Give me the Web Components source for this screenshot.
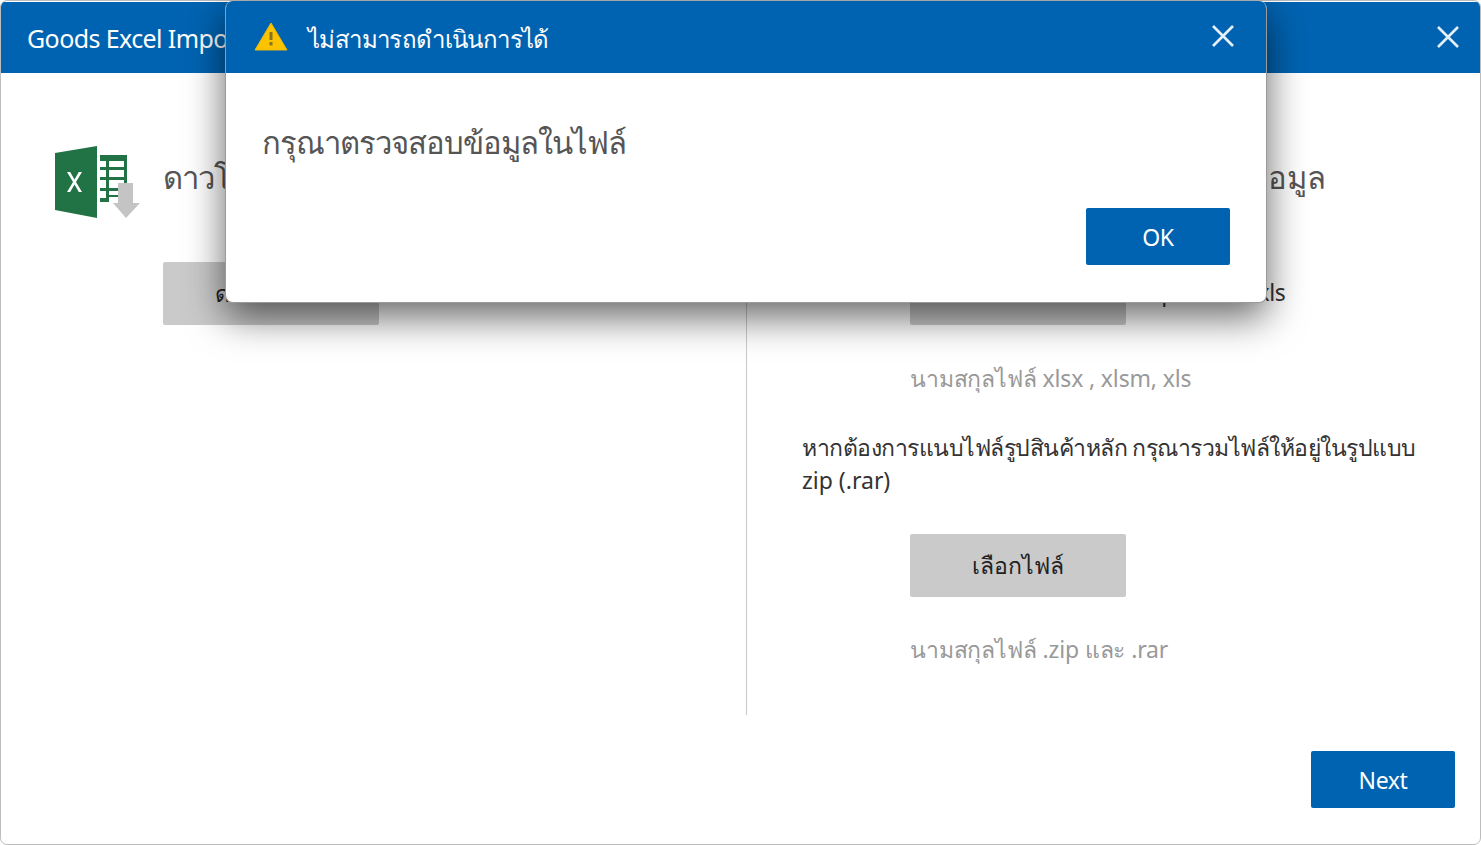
<!DOCTYPE html>
<html lang="th">
<head>
<meta charset="utf-8">
<title>Goods Excel Import</title>
<style>
  html, body { margin: 0; height: 100%; background: #fff; overflow: hidden; }
  body { font-family: "Noto Sans", "Open Sans", "DejaVu Sans", sans-serif; color: #333; }
  .file-row { display: flex; align-items: center; gap: 7px; font-size: 23px; color: #333; }
  .file-name { letter-spacing: -.5px; position: relative; top: -2px; }
  .hint { margin: 37px 0 0; color: #999; font-size: 23px; line-height: 33px; letter-spacing: -.15px; }
  .note { margin: 36px 0 37px -108px; font-size: 23px; line-height: 33px; color: #333; letter-spacing: -.5px; }
  .note span { letter-spacing: 0; }
</style>
</head>
<body>
<import-window heading="Goods Excel Import">
  <import-section slot="left" heading="ดาวโหลดไฟล์ตัวอย่าง" icon>
    <file-button>ดาวน์โหลด</file-button>
  </import-section>
  <import-section slot="right" heading="เลือกไฟล์ที่ต้องการนำเข้าข้อมูล">
    <div class="file-row"><file-button>เลือกไฟล์</file-button><span class="file-name">Import files.xls</span></div>
    <p class="hint">นามสกุลไฟล์ xlsx , xlsm, xls</p>
    <p class="note">หากต้องการแนบไฟล์รูปสินค้าหลัก กรุณารวมไฟล์ให้อยู่ในรูปแบบ <span>zip (.rar)</span></p>
    <file-button>เลือกไฟล์</file-button>
    <p class="hint" style="margin-top: 36px">นามสกุลไฟล์ .zip และ .rar</p>
  </import-section>
  <primary-button slot="footer">Next</primary-button>
</import-window>
<alert-dialog heading="ไม่สามารถดำเนินการได้">
  กรุณาตรวจสอบข้อมูลในไฟล์
  <primary-button slot="actions">OK</primary-button>
</alert-dialog>

<script>
const closeIcon = `<svg width="24" height="24" viewBox="0 0 24 24" fill="none" stroke="#e6f0fa" stroke-width="2.6"><path d="M2 2 22 22M22 2 2 22"/></svg>`;

class ImportWindow extends HTMLElement {
  constructor() {
    super();
    this.attachShadow({ mode: 'open' });
    this.shadowRoot.innerHTML = `
    <style>
      :host { display: flex; flex-direction: column; box-sizing: border-box; width: 1481px; height: 845px; border: 1px solid #bdbdbd; border-radius: 7px; overflow: hidden; background: #fff; }
      header { flex: none; height: 71px; margin-top: 1px; background: #0063b1; color: #fff; display: flex; align-items: center; justify-content: space-between; padding: 0 20px 0 26px; font-size: 25px; }
      header svg { display: block; margin-top: -2px; }
      .title { letter-spacing: -.6px; }
      .columns { display: grid; grid-template-columns: 745px 1px 1fr; height: 642px; }
      .rule { background: #c9c9c9; }
      footer { display: flex; justify-content: flex-end; padding: 36px 25px 0 0; }
    </style>
    <header><span class="title">${this.getAttribute('heading')}</span>${closeIcon}</header>
    <div class="columns">
      <slot name="left"></slot>
      <div class="rule"></div>
      <slot name="right"></slot>
    </div>
    <footer><slot name="footer"></slot></footer>`;
  }
}

class ImportSection extends HTMLElement {
  constructor() {
    super();
    this.attachShadow({ mode: 'open' });
    const icon = this.hasAttribute('icon') ? `
      <svg class="excel" width="86" height="74" viewBox="0 0 86 74">
        <path d="M0 8 42 1V73L0 65Z" fill="#217346"/>
        <path d="M12 27h3.200l4.300 7.500 4.300-7.500H27l-6 10 6 10h-3.200l-4.300-7.500-4.300 7.500H12l6-10Z" fill="#fff"/>
        <path d="M45 10H72V57H63V52H54V57H45V53H51V46H45V43H51V35H45V32H51V25H45V22H51V16H45ZM54 16V22H69V16ZM54 25V32H69V25ZM54 35V43H69V35ZM54 46V50H69V46Z" fill="#217346"/>
        <path d="M63 38H78V58H85L71 73 58 58H63Z" fill="#c4c4c4"/>
      </svg>` : '';
    this.shadowRoot.innerHTML = `
    <style>
      :host { display: block; padding: 66px 55px 0 54px; font-size: 23px; }
      :host([slot="right"]) { padding-left: 55px; }
      :host([slot="right"]) h2 { letter-spacing: -.1px; }
      .head { display: flex; align-items: flex-start; height: 123px; }
      .excel { flex: none; width: 86px; height: 74px; margin: 6px 22px 0 0; }
      h2 { margin: 0 0 0 108px; font-size: 31px; font-weight: 400; color: #555; letter-spacing: -1px; line-height: 76px; white-space: nowrap; }
      .excel + h2 { margin-left: 0; }
      .body { padding-left: 108px; }
    </style>
    <div class="head">${icon}<h2>${this.getAttribute('heading')}</h2></div>
    <div class="body"><slot></slot></div>`;
  }
}

class FileButton extends HTMLElement {
  constructor() {
    super();
    this.attachShadow({ mode: 'open' });
    this.shadowRoot.innerHTML = `
    <style>
      :host { display: flex; flex: none; align-items: center; justify-content: center; width: 216px; height: 63px; background: #cacaca; border-radius: 2px; color: #222; font-size: 23px; letter-spacing: 0; }
    </style>
    <slot></slot>`;
  }
}

class PrimaryButton extends HTMLElement {
  constructor() {
    super();
    this.attachShadow({ mode: 'open' });
    this.shadowRoot.innerHTML = `
    <style>
      :host { display: flex; align-items: center; justify-content: center; width: 144px; height: 57px; background: #0063b1; border-radius: 2px; color: #fff; font-size: 23px; letter-spacing: -.4px; }
    </style>
    <slot></slot>`;
  }
}

class AlertDialog extends HTMLElement {
  constructor() {
    super();
    this.attachShadow({ mode: 'open' });
    this.shadowRoot.innerHTML = `
    <style>
      :host { position: absolute; left: 225px; top: 1px; box-sizing: border-box; width: 1042px; height: 302px; display: flex; flex-direction: column; border-radius: 8px; background: #fff; border: 1px solid #9a9a9a; border-top: 0; box-shadow: 0 14px 38px rgba(0,0,0,.6); }
      header { flex: none; height: 72px; background: #0063b1; border-radius: 7px 7px 0 0; color: #fff; display: flex; align-items: center; padding: 0 31px 0 28px; font-size: 24px; }
      .warn { flex: none; margin-right: 20px; }
      .title { flex: 1; font-weight: 500; letter-spacing: -.6px; position: relative; top: 2px; }
      header svg:last-child { margin-top: -2px; }
      .msg { padding: 45px 36px 0; font-size: 31px; color: #555; letter-spacing: -1px; height: 90px; }
      .actions { display: flex; justify-content: flex-end; padding-right: 36px; }
    </style>
    <header>
      <svg class="warn" width="34" height="30" viewBox="0 0 34 30"><path d="M17 1 33 28H1Z" fill="#fcc400" stroke="#e8b810" stroke-linejoin="round"/><path d="M15.500 10h3v8h-3ZM15.500 20h3v3.500h-3Z" fill="#8a7420"/></svg>
      <span class="title">${this.getAttribute('heading')}</span>
      ${closeIcon}
    </header>
    <div class="msg"><slot></slot></div>
    <div class="actions"><slot name="actions"></slot></div>`;
  }
}

customElements.define('import-window', ImportWindow);
customElements.define('import-section', ImportSection);
customElements.define('file-button', FileButton);
customElements.define('primary-button', PrimaryButton);
customElements.define('alert-dialog', AlertDialog);
</script>
</body>
</html>
